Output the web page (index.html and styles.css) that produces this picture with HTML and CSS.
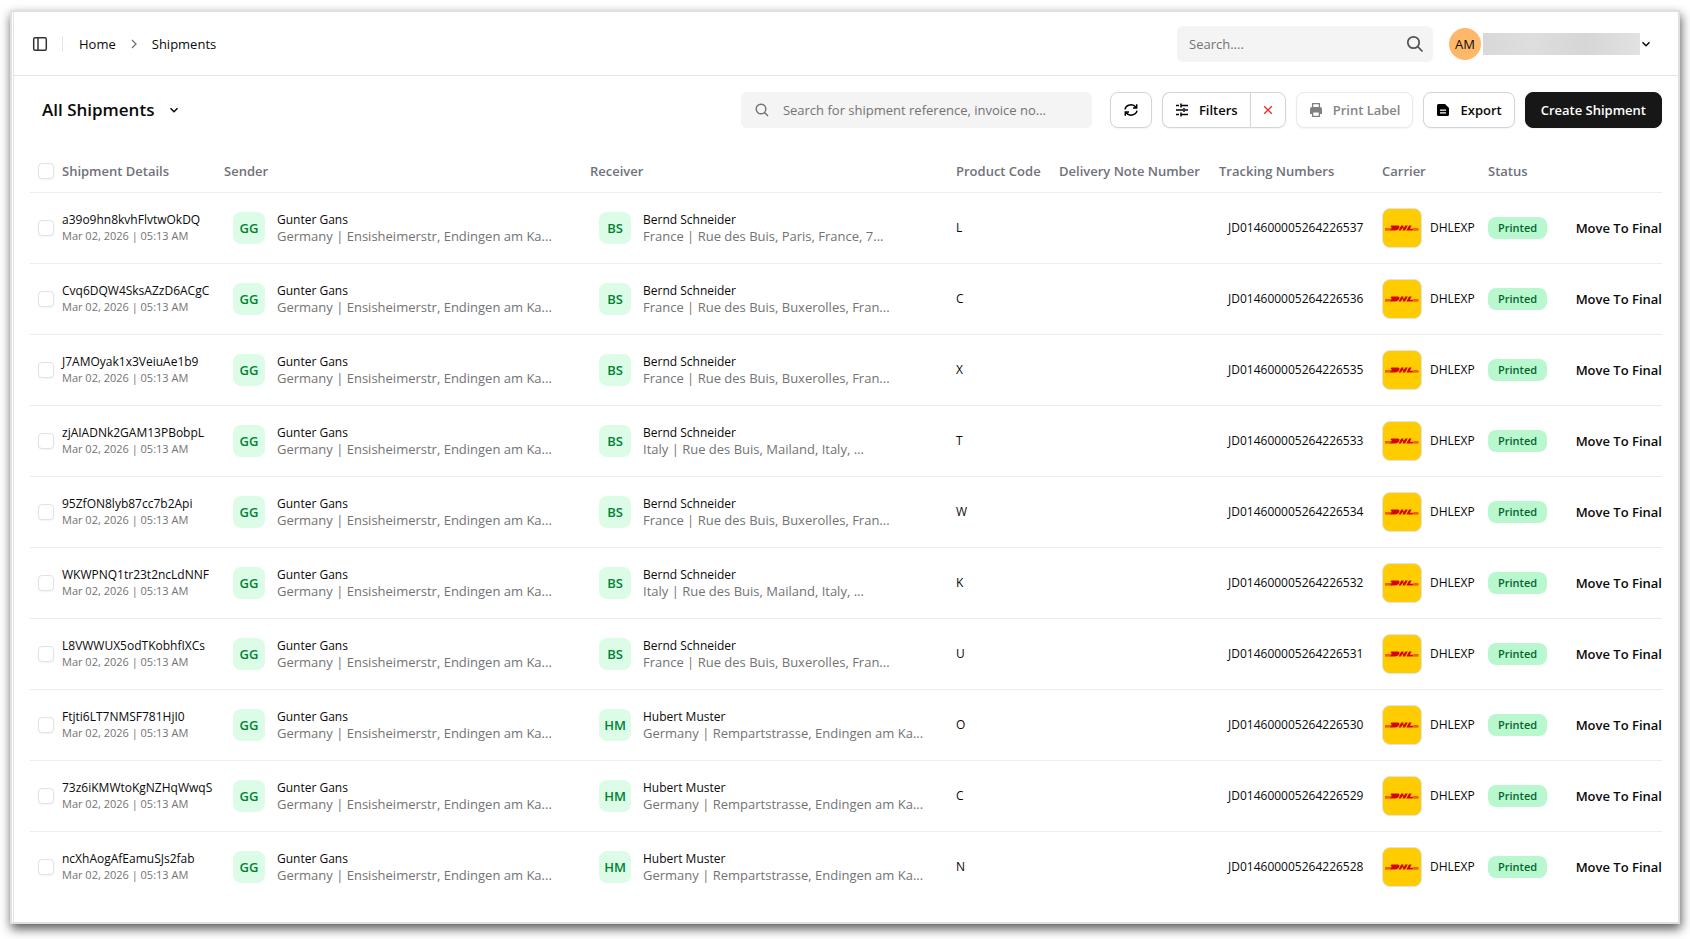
FILE: index.html
```html
<!DOCTYPE html>
<html lang="en">
<head>
<meta charset="utf-8">
<title>All Shipments</title>
<link rel="stylesheet" href="styles.css">
</head>
<body>
<svg class="sprite" aria-hidden="true">
  <symbol id="dhl" viewBox="0 0 38 38">
    <path d="M2 20.2h6.500v-.9H2zM2 21.400h6v-.8H2zM30.500 20.200h5v-.9h-5zM30 21.400h5.500v-.8h-5.500z" fill="#d40511" opacity=".7"/>
    <path d="M8.300 16.500h6.300c2 0 2.300 1.100 1.600 2.400-.8 1.600-2 2.500-4.200 2.500H7.200l1.700-3.100h4l-.7 1.200h-1.100l.7-1.200H7.400z" fill="#d40511"/>
    <path d="M18.200 16.500h2.600l-.9 1.800h1.400l.9-1.800h2.600l-2.700 4.900h-2.600l.9-1.800H19l-.9 1.800h-2.600zM26 16.500h2.600l-1.700 3.200h3.500l-.9 1.700h-6.200z" fill="#d40511"/>
  </symbol>
  <symbol id="chevron" viewBox="0 0 12 12">
    <path d="M2.500 4.300 6 7.800l3.500-3.500" fill="none" stroke="currentColor" stroke-width="1.500"/>
  </symbol>
</svg>
<div class="window">
  <header class="topbar">
    <button class="plain" aria-label="Toggle sidebar">
      <svg width="16" height="16" viewBox="0 0 16 16" fill="none" stroke="#333" stroke-width="1.500"><rect x="1.700" y="1.700" width="12.600" height="12.600" rx="1.500"/><path d="M6 2v12"/></svg>
    </button>
    <span class="divider"></span>
    <nav class="crumbs" aria-label="Breadcrumb">
      <a href="#">Home</a>
      <svg width="14" height="14" viewBox="0 0 14 14" fill="none" stroke="#737373" stroke-width="1.300"><path d="m5 3 4 4-4 4"/></svg>
      <a href="#">Shipments</a>
    </nav>
    <label class="search search-global">
      <input type="text" placeholder="Search...." aria-label="Search">
      <svg width="18" height="18" viewBox="0 0 18 18" fill="none" stroke="#525252" stroke-width="1.700"><circle cx="7.500" cy="7.500" r="5.700"/><path d="m11.700 11.700 4.800 4.800"/></svg>
    </label>
    <button class="plain account" aria-label="Account menu">
      <span class="initials">AM</span>
      <span class="name"></span>
      <svg width="12" height="12"><use href="#chevron"/></svg>
    </button>
  </header>
  <main>
    <div class="toolbar">
      <h1><button class="plain view">All Shipments <svg width="12" height="12"><use href="#chevron"/></svg></button></h1>
      <label class="search search-list">
        <svg width="14" height="14" viewBox="0 0 14 14" fill="none" stroke="#737373" stroke-width="1.400"><circle cx="6" cy="6" r="4.800"/><path d="m9.500 9.500 3.500 3.500"/></svg>
        <input type="text" placeholder="Search for shipment reference, invoice no..." aria-label="Search shipments">
      </label>
      <button class="btn refresh" aria-label="Refresh">
        <svg width="14" height="14" viewBox="0 0 14 14" fill="none" stroke="#000" stroke-width="1.500"><path d="M1 6.300A6 5.500 0 0 1 12 4.500M13 7.700A6 5.500 0 0 1 2 9.500M12.700 1.300v3.600H9M1.300 12.700V9.100H5"/></svg>
      </button>
      <div class="group">
        <button class="btn filters">
          <svg width="14" height="14" viewBox="0 0 14 14" fill="none" stroke="#000" stroke-width="1.500"><path d="M1 2.500h3M6 2.500h7M6 .5v4M1 7h7M10 7h3M9 5v4M1 11.500h3M6 11.500h7M6 9.500v4"/></svg>
          Filters
        </button>
        <button class="btn clear" aria-label="Clear filters">
          <svg width="10" height="10" viewBox="0 0 10 10" stroke="#ef2b2b" stroke-width="1.400"><path d="m1.200 1.200 7.600 7.600M8.800 1.200 1.200 8.800"/></svg>
        </button>
      </div>
      <button class="btn" disabled>
        <svg width="14" height="14" viewBox="0 0 14 14" fill="#808080"><path fill-rule="evenodd" d="M3 0h8v4H9.700V1.300H4.300V4H3z"/><path fill-rule="evenodd" d="M3 4h8a2 2 0 0 1 2 2v5h-2v3H3v-3H1V6a2 2 0 0 1 2-2zm1.300 5.500v3.200h5.400V9.500z"/></svg>
        Print Label
      </button>
      <button class="btn">
        <svg width="14" height="14" viewBox="0 0 14 14"><path d="M2.500 1H9l4 4v6.500a1.500 1.500 0 0 1-1.500 1.500h-9A1.500 1.500 0 0 1 1 11.500v-9A1.500 1.500 0 0 1 2.500 1z"/><path d="M4 7.200h6M4 9.800h6" stroke="#fff" stroke-width="1.200"/></svg>
        Export
      </button>
      <button class="btn primary">Create Shipment</button>
    </div>
    <table>
      <thead>
        <tr>
          <th class="c-details"><span class="details"><input type="checkbox" aria-label="Select all">Shipment Details</span></th>
          <th class="c-party">Sender</th>
          <th class="c-party">Receiver</th>
          <th class="c-code">Product Code</th>
          <th class="c-note">Delivery Note Number</th>
          <th class="c-track">Tracking Numbers</th>
          <th class="c-carrier">Carrier</th>
          <th class="c-status">Status</th>
          <th class="c-action" aria-label="Action"></th>
        </tr>
      </thead>
      <tbody id="rows"></tbody>
    </table>
  </main>
</div>
<script src="shipments.js"></script>
</body>
</html>
```
FILE: styles.css
```css
* { box-sizing: border-box; }
body {
  margin: 0;
  padding: 10px 10px 15px;
  background: #fff;
  color: #0a0a0a;
  font: 13px/20px "Open Sans", "Noto Sans", sans-serif;
}
button, input { font: inherit; color: inherit; }
a { color: inherit; text-decoration: none; }
svg { display: block; flex: none; }
.sprite { position: absolute; width: 0; height: 0; }

.window {
  border: 2px solid #e0e0e0;
  box-shadow: inset 1px 0 #fff, inset 2px 0 #e5e5e5, 1px 5px 10px rgba(0, 0, 0, .65);
  background: #fff;
}
.plain { border: 0; padding: 0; background: none; display: flex; align-items: center; }

.topbar {
  display: flex;
  align-items: center;
  height: 64px;
  margin-left: 2px;
  padding: 0 26px 0 18px;
  border-bottom: 1px solid #e5e5e5;
}
.divider { width: 1px; height: 16px; margin: 0 16px 0 14px; background: #e5e5e5; }
.crumbs { display: flex; align-items: center; gap: 11px; flex: 1; }

.search { display: flex; align-items: center; height: 36px; border-radius: 6px; background: #f4f4f5; }
.search input { flex: 1; min-width: 0; padding: 0; border: 0; outline: 0; background: none; }
.search input::placeholder { color: #737373; opacity: 1; }
.search-global { width: 256px; padding: 0 9px 0 12px; }
.search-list { width: 351px; padding: 0 14px; gap: 14px; margin-right: 8px; }

.account { margin-left: 16px; }
.initials { width: 32px; height: 32px; margin-right: 2px; border-radius: 50%; background: #ffb86a; line-height: 32px; text-align: center; }
.name { width: 157px; height: 22px; background: linear-gradient(90deg, #d8d8d8, #dedede 30%, #d6d6d6 65%, #e2e2e2); }

main { padding: 15px 16px 20px 18px; }
.toolbar { display: flex; align-items: center; gap: 10px; height: 38px; padding-left: 12px; }
h1 { margin: 0; flex: 1; font-size: 17px; line-height: 24px; font-weight: 600; }
.view { gap: 14px; font-weight: 600; }
.btn {
  display: flex;
  align-items: center;
  gap: 10px;
  height: 36px;
  padding: 0 12px;
  border: 1px solid #d1d5dc;
  border-radius: 8px;
  background: #fff;
  color: #0a0a0a;
  font-weight: 600;
  white-space: nowrap;
  box-shadow: 0 1px 2px rgba(0, 0, 0, .05);
}
.btn:disabled { color: #858585; border-color: #e8eaed; }
.refresh { padding: 0 13px; }
.group { display: flex; }
.filters { border-radius: 8px 0 0 8px; border-right: 0; }
.clear { border-radius: 0 8px 8px 0; }
.primary { padding: 0 15px; border-color: #171717; background: #171717; color: #fff; }

table { width: 100%; border-collapse: collapse; table-layout: fixed; margin-top: 22px; }
th { height: 41px; padding: 0; text-align: left; font-weight: 600; color: #71717a; white-space: nowrap; }
td { height: 71px; padding: 0; font-size: 12px; }
tr { border-bottom: 1px solid #ededed; }
tbody tr:last-child { border-bottom: 0; }
.c-details { width: 194px; }
.c-code { width: 103px; }
.c-note { width: 160px; }
.c-track { width: 163px; }
.c-carrier { width: 106px; }
.c-status { width: 70px; }
.c-action { width: 104px; }

.details, .party, .carrier { display: flex; align-items: center; }
.details { gap: 8px; padding-left: 8px; line-height: 16px; }
.details strong, .party strong { display: block; font-weight: 400; }
.details small, .party small { display: block; color: #737373; white-space: nowrap; }
.details small { font-size: 11px; }
.party { gap: 12px; padding-left: 9px; line-height: 17px; }
.party small { font-size: 13px; }
.badge { width: 32px; height: 32px; border-radius: 8px; background: #dcfce7; color: #008236; font-size: 13px; font-weight: 600; line-height: 32px; text-align: center; }
.tracking { padding-left: 9px; }
.carrier { gap: 8px; }
.logo { border: 1px solid #dfe3e8; border-radius: 8px; background: #fc0; overflow: hidden; }
.status { display: inline-block; padding: 1px 10px; border-radius: 8px; background: #b9f8cf; color: #016630; font-weight: 600; font-size: 11px; }
.move { margin-left: auto; font-size: 13px; font-weight: 600; white-space: nowrap; }

input[type="checkbox"] {
  appearance: none;
  flex: none;
  width: 16px;
  height: 16px;
  margin: 0;
  border: 1px solid #e2e2e2;
  border-radius: 4px;
  background: #fff;
  box-shadow: 0 1px 2px rgba(0, 0, 0, .05);
}
```
FILE: shipments.js
```js
const gans = ["GG", "Gunter Gans", "Germany | Ensisheimerstr, Endingen am Ka..."];
const paris = ["BS", "Bernd Schneider", "France | Rue des Buis, Paris, France, 7..."];
const buxerolles = ["BS", "Bernd Schneider", "France | Rue des Buis, Buxerolles, Fran..."];
const mailand = ["BS", "Bernd Schneider", "Italy | Rue des Buis, Mailand, Italy, ..."];
const muster = ["HM", "Hubert Muster", "Germany | Rempartstrasse, Endingen am Ka..."];

const shipments = [
  ["a39o9hn8kvhFlvtwOkDQ", paris, "L", 37],
  ["Cvq6DQW4SksAZzD6ACgC", buxerolles, "C", 36],
  ["J7AMOyak1x3VeiuAe1b9", buxerolles, "X", 35],
  ["zjAIADNk2GAM13PBobpL", mailand, "T", 33],
  ["95ZfON8lyb87cc7b2Api", buxerolles, "W", 34],
  ["WKWPNQ1tr23t2ncLdNNF", mailand, "K", 32],
  ["L8VWWUX5odTKobhfIXCs", buxerolles, "U", 31],
  ["Ftjti6LT7NMSF781HjI0", muster, "O", 30],
  ["73z6iKMWtoKgNZHqWwqS", muster, "C", 29],
  ["ncXhAogAfEamuSJs2fab", muster, "N", 28],
];

const party = ([initials, name, address]) =>
  `<td><div class="party"><span class="badge">${initials}</span><div><strong>${name}</strong><small>${address}</small></div></div></td>`;

document.getElementById("rows").innerHTML = shipments.map(([id, receiver, code, n]) => `
  <tr>
    <td><div class="details"><input type="checkbox" aria-label="Select ${id}"><div><strong>${id}</strong><small>Mar 02, 2026 | 05:13 AM</small></div></div></td>
    ${party(gans)}${party(receiver)}
    <td>${code}</td>
    <td></td>
    <td class="tracking">JD0146000052642265${n}</td>
    <td><div class="carrier"><svg class="logo" width="40" height="40" role="img" aria-label="DHL"><use href="#dhl"/></svg>DHLEXP</div></td>
    <td><span class="status">Printed</span></td>
    <td><button class="plain move">Move To Final</button></td>
  </tr>`).join("");
```
